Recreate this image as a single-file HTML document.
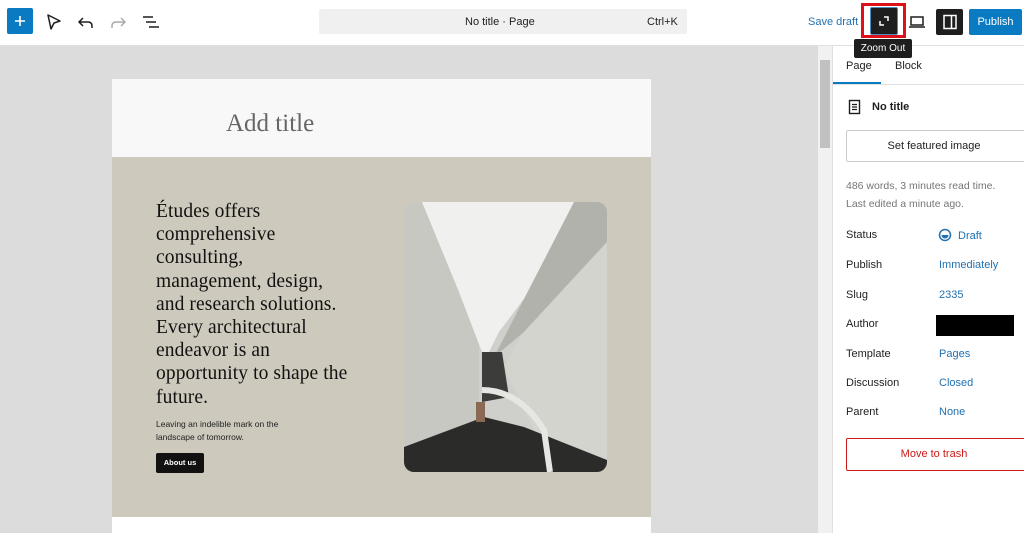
<!DOCTYPE html>
<html><head><style>
*{box-sizing:border-box;margin:0;padding:0}
body{width:1024px;height:533px;overflow:hidden;font-family:"Liberation Sans",sans-serif;background:#fff;position:relative;color:#1e1e1e}
.a{position:absolute}
.top{left:0;top:0;width:1024px;height:46px;border-bottom:1px solid #e0e0e0;background:#fff}
.canvas{left:0;top:46px;width:818px;height:487px;background:#dcdcdc}
.sb{left:818px;top:46px;width:14px;height:487px;background:#f1f1f1}
.side{left:832px;top:46px;width:192px;height:487px;background:#fff;border-left:1px solid #e0e0e0}
.serif{font-family:"Liberation Serif",serif}
.lbl{font-size:11px;color:#1e1e1e;left:846px}
.val{font-size:11px;color:#2271b1;left:939px}
</style></head><body>
<div class="a top"></div>
<div class="a" style="left:7px;top:8px;width:26px;height:26px;background:#0a7ac2;border-radius:2px"></div>
<svg class="a" style="left:12px;top:13px" width="16" height="16" viewBox="0 0 16 16"><path d="M8 3V13M3 8H13" stroke="#fff" stroke-width="1.6"/></svg>
<svg class="a" style="left:44px;top:12px" width="20" height="20" viewBox="0 0 20 20"><path d="M4 3 L16 9 L10 11 L7 17 Z" fill="none" stroke="#1e1e1e" stroke-width="1.5" stroke-linejoin="round"/></svg>
<svg class="a" style="left:76px;top:12px" width="20" height="20" viewBox="0 0 20 20"><path d="M7 6 L3 10 L7 14 M3 10 H12 Q16 10 16 14 V16" fill="none" stroke="#1e1e1e" stroke-width="1.5"/></svg>
<svg class="a" style="left:108px;top:12px" width="20" height="20" viewBox="0 0 20 20"><path d="M13 6 L17 10 L13 14 M17 10 H8 Q4 10 4 14 V16" fill="none" stroke="#aaa" stroke-width="1.5"/></svg>
<svg class="a" style="left:141px;top:12px" width="20" height="20" viewBox="0 0 20 20"><path d="M2 5 H12 M5 10 H15 M8 15 H18" stroke="#1e1e1e" stroke-width="1.5"/></svg>
<div class="a" style="left:319px;top:9px;width:368px;height:25px;background:#f0f0f0;border-radius:2px"></div>
<div class="a" style="left:465px;top:16px;font-size:11px">No title · Page</div>
<div class="a" style="left:647px;top:16px;font-size:11px">Ctrl+K</div>
<div class="a" style="left:808px;top:16px;font-size:11px;color:#2271b1">Save draft</div>
<div class="a" style="left:861px;top:3px;width:45px;height:35px;border:3px solid #e0101a"></div>
<div class="a" style="left:870px;top:7px;width:28px;height:28px;background:#1e1e1e;border:1px solid #4a8fc4;border-radius:2px"></div>
<svg class="a" style="left:875px;top:12px" width="18" height="18" viewBox="0 0 18 18"><path d="M5 9 V13 H9 M9 5 H13 V9" fill="none" stroke="#fff" stroke-width="1.5"/></svg>
<svg class="a" style="left:907px;top:12px" width="20" height="20" viewBox="0 0 20 20"><path d="M4 5 H16 V13 H4 Z M2 15 H18" fill="none" stroke="#1e1e1e" stroke-width="1.5"/></svg>
<div class="a" style="left:936px;top:9px;width:27px;height:26px;background:#1e1e1e;border-radius:2px"></div>
<svg class="a" style="left:940px;top:12px" width="20" height="20" viewBox="0 0 20 20"><path d="M4 3.5 H16 V16.5 H4 Z M11.5 3.5 V16.5" fill="none" stroke="#fff" stroke-width="1.5"/></svg>
<div class="a" style="left:969px;top:9px;width:53px;height:26px;background:#0a7ac2;border-radius:2px;color:#fff;font-size:11px;text-align:center;line-height:26px">Publish</div>
<div class="a" style="left:854px;top:39px;width:58px;height:19px;background:#1e1e1e;color:#fff;font-size:10px;text-align:center;line-height:19px;border-radius:2px;z-index:3">Zoom Out</div>

<div class="a canvas"></div>
<div class="a sb"><div style="margin:14px 2px 0;height:88px;background:#c1c1c1"></div></div>
<div class="a" style="left:112px;top:79px;width:539px;height:454px;background:#fff"></div>
<div class="a" style="left:112px;top:79px;width:539px;height:78px;background:#f8f8f8"></div>
<div class="a serif" style="left:226px;top:110px;font-size:25px;color:#666">Add title</div>
<div class="a" style="left:112px;top:157px;width:539px;height:360px;background:#cdc9bc"></div>
<div class="a serif" style="left:156px;top:200px;font-size:19.5px;line-height:23.2px;color:#111;white-space:nowrap;letter-spacing:0.1px">Études offers<br>comprehensive<br>consulting,<br>management, design,<br>and research solutions.<br>Every architectural<br>endeavor is an<br>opportunity to shape the<br>future.</div>
<div class="a" style="left:156px;top:418px;font-size:8.5px;line-height:13px;color:#222;width:150px">Leaving an indelible mark on the landscape of tomorrow.</div>
<div class="a" style="left:156px;top:453px;width:48px;height:20px;background:#111;color:#fff;font-size:7.5px;font-weight:bold;text-align:center;line-height:20px;border-radius:2px">About us</div>
<svg class="a" style="left:404px;top:202px;border-radius:10px" width="203" height="270" viewBox="0 0 203 270">
<rect width="203" height="270" fill="#cfcfcb"/>
<polygon points="0,0 20,0 75,140 75,240 0,255" fill="#c8c8c3"/>
<polygon points="18,0 170,0 140,70 95,130 85,150 78,150 55,90" fill="#f0f0ee"/>
<polygon points="170,0 203,0 203,40 120,130 90,155" fill="#b2b2ad"/>
<polygon points="203,40 203,270 150,270 100,165 120,130" fill="#d4d4cf"/>
<polygon points="78,150 98,150 105,195 78,200" fill="#3c3c3a"/>
<polygon points="0,245 80,215 120,225 203,258 203,270 0,270" fill="#2b2b29"/>
<path d="M78 188 Q115 188 140 228 L146 270" stroke="#e6e6e2" stroke-width="6" fill="none"/>
<rect x="72" y="200" width="9" height="20" fill="#8a6a55"/>
</svg>

<div class="a side"></div>
<div class="a" style="left:846px;top:60px;font-size:11px">Page</div>
<div class="a" style="left:895px;top:60px;font-size:11px">Block</div>
<div class="a" style="left:833px;top:84px;width:191px;height:1px;background:#e0e0e0"></div>
<div class="a" style="left:833px;top:82px;width:48px;height:2px;background:#0a7ac2"></div>
<svg class="a" style="left:848px;top:99px" width="14" height="16" viewBox="0 0 14 16"><rect x="1.5" y="1.5" width="10" height="13" fill="none" stroke="#1e1e1e" stroke-width="1.4"/><path d="M4 5.5H9M4 8H9M4 10.5H9" stroke="#1e1e1e" stroke-width="1.2"/></svg>
<div class="a" style="left:872px;top:101px;font-size:11px;font-weight:bold">No title</div>
<div class="a" style="left:846px;top:130px;width:180px;height:32px;border:1px solid #ccc;border-radius:2px;font-size:11px;text-align:center;line-height:30px;padding-right:4px">Set featured image</div>
<div class="a" style="left:846px;top:177px;font-size:10.5px;color:#757575;line-height:18px">486 words, 3 minutes read time.<br>Last edited a minute ago.</div>
<div class="a lbl" style="top:229px">Status</div>
<svg class="a" style="left:938px;top:228px" width="14" height="14" viewBox="0 0 14 14"><circle cx="7" cy="7" r="5.5" fill="none" stroke="#2271b1" stroke-width="1.5"/><path d="M3.5 7 A3.5 3.5 0 0 0 10.5 7 Z" fill="#2271b1"/></svg>
<div class="a val" style="top:230px;left:958px">Draft</div>
<div class="a lbl" style="top:259px">Publish</div><div class="a val" style="top:259px">Immediately</div>
<div class="a lbl" style="top:289px">Slug</div><div class="a val" style="top:289px">2335</div>
<div class="a lbl" style="top:318px">Author</div>
<div class="a" style="left:936px;top:315px;width:78px;height:21px;background:#000"></div>
<div class="a lbl" style="top:348px">Template</div><div class="a val" style="top:348px">Pages</div>
<div class="a lbl" style="top:377px">Discussion</div><div class="a val" style="top:377px">Closed</div>
<div class="a lbl" style="top:406px">Parent</div><div class="a val" style="top:406px">None</div>
<div class="a" style="left:846px;top:438px;width:180px;height:33px;border:1px solid #cc1818;border-radius:2px;font-size:11px;color:#cc1818;text-align:center;line-height:31px;padding-right:4px">Move to trash</div>
</body></html>
